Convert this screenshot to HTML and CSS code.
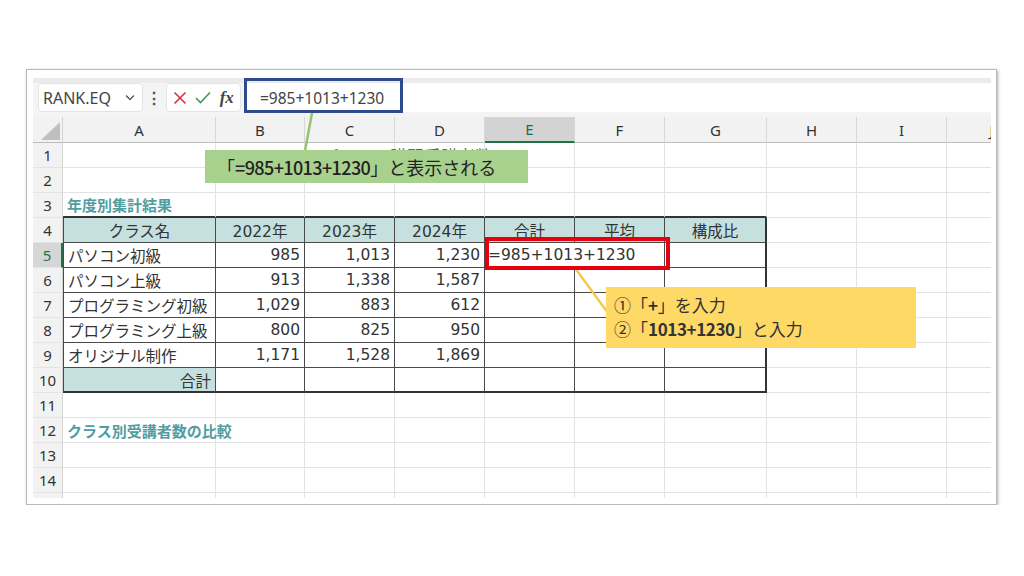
FILE: index.html
```html
<!DOCTYPE html>
<html lang="ja">
<head>
<meta charset="utf-8">
<title>Excel 数式入力</title>
<link rel="stylesheet" href="styles.css">
</head>
<body>
<div class="frame">
  <div class="topband"></div>
  <div class="fbar">
    <div class="namebox"><span>RANK.EQ</span>
      <svg class="chev" width="10" height="7" viewBox="0 0 10 7"><path d="M1 1.5 L5 5.5 L9 1.5" fill="none" stroke="#555" stroke-width="1.3"/></svg>
    </div>
    <div class="sep">⋮</div>
    <div class="btns">
      <svg width="14" height="14" viewBox="0 0 14 14"><path d="M1.5 1.5 L12.5 12.5 M12.5 1.5 L1.5 12.5" stroke="#d2343f" stroke-width="1.6" fill="none"/></svg>
      <svg width="16" height="13" viewBox="0 0 16 13"><path d="M1 7 L5.5 11.5 L15 1.5" stroke="#3c9b57" stroke-width="1.6" fill="none"/></svg>
      <span class="fx">fx</span>
    </div>
    <div class="field">=985+1013+1230</div>
  </div>

  <div class="sheet">
    <div class="corner"><i></i></div>
    <div class="ch">A</div><div class="ch">B</div><div class="ch">C</div><div class="ch">D</div><div class="ch sel">E</div><div class="ch">F</div><div class="ch">G</div><div class="ch">H</div><div class="ch">I</div><div class="ch">J</div>

    <div class="rh">1</div><div class="c"></div><div class="c"></div><div class="c"><span class="ttl">パソコン講習受講者数</span></div><div class="c"></div><div class="c"></div><div class="c"></div><div class="c"></div><div class="c"></div><div class="c"></div><div class="c"></div>

    <div class="rh">2</div><div class="c"></div><div class="c"></div><div class="c"></div><div class="c"></div><div class="c"></div><div class="c"></div><div class="c"></div><div class="c"></div><div class="c"></div><div class="c"></div>

    <div class="rh">3</div><div class="c tp sec">年度別集計結果</div><div class="c tp"></div><div class="c tp"></div><div class="c tp"></div><div class="c tp"></div><div class="c tp"></div><div class="c tp"></div><div class="c"></div><div class="c"></div><div class="c"></div>

    <div class="rh">4</div><div class="c t tl th">クラス名</div><div class="c t th">2022年</div><div class="c t th">2023年</div><div class="c t th">2024年</div><div class="c t th">合計</div><div class="c t th">平均</div><div class="c t th tr">構成比</div><div class="c"></div><div class="c"></div><div class="c"></div>

    <div class="rh sel">5</div><div class="c t tl">パソコン初級</div><div class="c t n">985</div><div class="c t n">1,013</div><div class="c t n">1,230</div><div class="c t ed">=985+1013+1230</div><div class="c t tr"></div><div class="c"></div><div class="c"></div><div class="c"></div>

    <div class="rh">6</div><div class="c t tl">パソコン上級</div><div class="c t n">913</div><div class="c t n">1,338</div><div class="c t n">1,587</div><div class="c t"></div><div class="c t"></div><div class="c t tr"></div><div class="c"></div><div class="c"></div><div class="c"></div>

    <div class="rh">7</div><div class="c t tl">プログラミング初級</div><div class="c t n">1,029</div><div class="c t n">883</div><div class="c t n">612</div><div class="c t"></div><div class="c t"></div><div class="c t tr"></div><div class="c"></div><div class="c"></div><div class="c"></div>

    <div class="rh">8</div><div class="c t tl">プログラミング上級</div><div class="c t n">800</div><div class="c t n">825</div><div class="c t n">950</div><div class="c t"></div><div class="c t"></div><div class="c t tr"></div><div class="c"></div><div class="c"></div><div class="c"></div>

    <div class="rh">9</div><div class="c t tl">オリジナル制作</div><div class="c t n">1,171</div><div class="c t n">1,528</div><div class="c t n">1,869</div><div class="c t"></div><div class="c t"></div><div class="c t tr"></div><div class="c"></div><div class="c"></div><div class="c"></div>

    <div class="rh">10</div><div class="c t tl th n bb">合計</div><div class="c t bb"></div><div class="c t bb"></div><div class="c t bb"></div><div class="c t bb"></div><div class="c t bb"></div><div class="c t tr bb"></div><div class="c"></div><div class="c"></div><div class="c"></div>

    <div class="rh">11</div><div class="c"></div><div class="c"></div><div class="c"></div><div class="c"></div><div class="c"></div><div class="c"></div><div class="c"></div><div class="c"></div><div class="c"></div><div class="c"></div>

    <div class="rh">12</div><div class="c sec">クラス別受講者数の比較</div><div class="c"></div><div class="c"></div><div class="c"></div><div class="c"></div><div class="c"></div><div class="c"></div><div class="c"></div><div class="c"></div><div class="c"></div>

    <div class="rh">13</div><div class="c"></div><div class="c"></div><div class="c"></div><div class="c"></div><div class="c"></div><div class="c"></div><div class="c"></div><div class="c"></div><div class="c"></div><div class="c"></div>

    <div class="rh">14</div><div class="c"></div><div class="c"></div><div class="c"></div><div class="c"></div><div class="c"></div><div class="c"></div><div class="c"></div><div class="c"></div><div class="c"></div><div class="c"></div>

    <div class="rh">15</div><div class="c"></div><div class="c"></div><div class="c"></div><div class="c"></div><div class="c"></div><div class="c"></div><div class="c"></div><div class="c"></div><div class="c"></div><div class="c"></div>
  </div>

  <svg class="leaders" width="969" height="434" viewBox="0 0 969 434">
    <line x1="285" y1="43" x2="278" y2="81" stroke="#93c46f" stroke-width="2.5"/>
    <line x1="548" y1="198" x2="581" y2="243" stroke="#f3c645" stroke-width="2.2"/>
  </svg>
  <div class="hl-navy"></div>
  <div class="hl-red"></div>
  <div class="note-green">「<span class="lat">=985+1013+1230</span>」と表示される</div>
  <div class="note-yellow">
    <div>①「<span class="lat">+</span>」を入力</div>
    <div>②「<span class="lat">1013+1230</span>」と入力</div>
  </div>
</div>
</body>
</html>
```

FILE: styles.css
```css
* { box-sizing: border-box; }

html, body {
  margin: 0;
  padding: 0;
  background: #ffffff;
}

body {
  padding: 69px 0 0 26px;
  font-family: "Noto Sans", "Noto Sans CJK JP", sans-serif;
}

.frame {
  position: relative;
  width: 971px;
  height: 436px;
  border: 1px solid #b9b9b9;
  box-shadow: 1px 1px 3px rgba(0, 0, 0, 0.3);
  background: #ffffff;
  padding: 0 5px 6px 6px;
}

.topband {
  height: 8px;
}

.fbar {
  height: 39px;
  border-top: 5px solid #ebebeb;
  background: #f4f4f4;
  display: flex;
  align-items: flex-start;
}

.namebox {
  margin-left: 5px;
  width: 105px;
  height: 29px;
  background: #ffffff;
  border-radius: 4px;
  border: 1px solid #e4e4e4;
  display: flex;
  align-items: center;
  justify-content: space-between;
  padding: 0 7px 0 4px;
  font-family: "Noto Sans", sans-serif;
  font-size: 16px;
  color: #444;
}

.sep {
  width: 22px;
  height: 29px;
  display: flex;
  align-items: center;
  justify-content: center;
  font-size: 16px;
  font-weight: bold;
  color: #555;
}

.btns {
  margin-left: 1px;
  width: 75px;
  height: 29px;
  background: #ffffff;
  border-radius: 4px;
  border: 1px solid #e4e4e4;
  display: flex;
  align-items: center;
  justify-content: space-around;
  padding: 0 2px;
}

.fx {
  font-family: "Liberation Serif", serif;
  font-style: italic;
  font-weight: bold;
  font-size: 17px;
  color: #444;
}

.field {
  margin-left: 3px;
  flex: 1;
  height: 29px;
  background: #ffffff;
  display: flex;
  align-items: center;
  padding-left: 16px;
  font-family: "Noto Sans", sans-serif;
  font-size: 15.5px;
  color: #444;
}

.sheet {
  width: 958px;
  height: 381px;
  overflow: hidden;
  display: grid;
  grid-template-columns: 30px 153px 89px 90px 90px 90px 90px 102px 90px 90px 90px;
  grid-template-rows: 26px repeat(15, 25px);
}

.corner {
  position: relative;
  background: #f2f2f2;
  border-right: 1px solid #d4d4d4;
  border-bottom: 1px solid #bdbdbd;
}

.corner i {
  position: absolute;
  right: 2px;
  bottom: 2px;
  width: 19px;
  height: 18px;
  background: #bfbfbf;
  clip-path: polygon(100% 0, 100% 100%, 0 100%);
}

.ch {
  background: #f2f2f2;
  border-right: 1px solid #d8d8d8;
  border-bottom: 1px solid #bdbdbd;
  display: flex;
  align-items: center;
  justify-content: center;
  font-family: "Noto Sans", sans-serif;
  font-size: 15px;
  color: #333;
}

.ch.sel {
  background: #d3d3d3;
  color: #1f6e43;
  border-bottom: 2px solid #217346;
}

.rh {
  background: #f2f2f2;
  border-right: 1px solid #d4d4d4;
  border-bottom: 1px solid #e4e4e4;
  display: flex;
  align-items: center;
  justify-content: center;
  font-family: "Noto Sans", sans-serif;
  font-size: 15px;
  color: #333;
}

.rh.sel {
  background: #d6d6d6;
  color: #217346;
  border-right: 2px solid #217346;
}

.c {
  border-right: 1px solid #e3e3e3;
  border-bottom: 1px solid #e3e3e3;
  display: flex;
  align-items: center;
  padding: 0 4px;
  white-space: nowrap;
  font-family: "DejaVu Sans", "Noto Sans CJK JP", sans-serif;
  font-size: 15.5px;
  color: #333;
  overflow: visible;
}

.t {
  border-right-color: #4a4a4a;
  border-bottom-color: #4a4a4a;
}

.tl { border-left: 1px solid #4a4a4a; }
.tr { border-right: 2px solid #333; }
.tp { border-bottom: 2px solid #333; }
.bb { border-bottom: 2px solid #333; }

.th {
  background: #c6e0e0;
  justify-content: center;
}

.n { justify-content: flex-end; }

.ed {
  grid-column: span 2;
  padding-left: 3px;
}

.sec {
  font-family: "Noto Sans CJK JP", sans-serif;
  font-weight: bold;
  font-size: 15px;
  color: #519d9f;
}

.ttl {
  padding-left: 13px;
  font-family: "Noto Sans CJK JP", sans-serif;
  font-size: 17px;
  color: #666;
}

.leaders {
  position: absolute;
  left: 0;
  top: 0;
}

.hl-navy {
  position: absolute;
  left: 217px;
  top: 8px;
  width: 159px;
  height: 35px;
  border: 3px solid #2e4c8a;
}

.hl-red {
  position: absolute;
  left: 458px;
  top: 167px;
  width: 185px;
  height: 33px;
  border: 4px solid #e6000d;
}

.note-green {
  position: absolute;
  left: 178px;
  top: 80px;
  width: 323px;
  height: 33px;
  background: #a9d18e;
  display: flex;
  align-items: center;
  padding-left: 12px;
  font-family: "Noto Sans CJK JP", sans-serif;
  font-size: 18px;
  color: #222;
  white-space: nowrap;
}

.note-yellow {
  position: absolute;
  left: 579px;
  top: 217px;
  width: 310px;
  height: 61px;
  background: #ffd966;
  padding: 6px 0 0 8px;
  font-family: "Noto Sans CJK JP", sans-serif;
  font-size: 17px;
  line-height: 24px;
  color: #333;
  white-space: nowrap;
}

.lat {
  font-weight: 500;
  letter-spacing: -0.6px;
}

.note-yellow .lat {
  font-weight: 700;
  letter-spacing: -0.4px;
}
```
